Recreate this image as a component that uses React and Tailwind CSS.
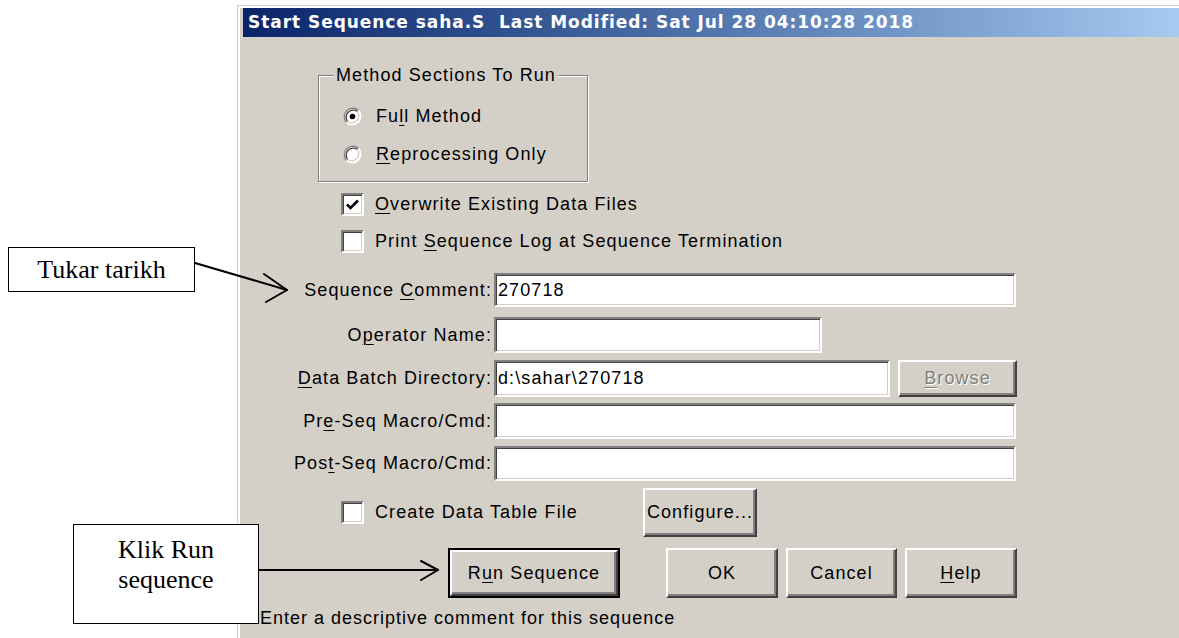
import React from "react";

// Mnemonic letter of a Windows control label
function U({ children }) {
  return <span className="underline underline-offset-[3px] decoration-1">{children}</span>;
}

function Radio({ checked }) {
  return (
    <svg width="19" height="19" viewBox="0 0 19 19" className="shrink-0">
      <circle cx="9.5" cy="9.5" r="8.5" fill="#fff" />
      <path d="M3.5 15.5 A8.5 8.5 0 0 1 15.5 3.5" stroke="#808080" strokeWidth="1.5" fill="none" />
      <path d="M3.5 15.5 A8.5 8.5 0 0 0 15.5 3.5" stroke="#ffffff" strokeWidth="1.5" fill="none" />
      <path d="M4.6 14.4 A7 7 0 0 1 14.4 4.6" stroke="#404040" strokeWidth="1.3" fill="none" />
      <path d="M4.6 14.4 A7 7 0 0 0 14.4 4.6" stroke="#d4d0c8" strokeWidth="1.3" fill="none" />
      {checked && <circle cx="9.5" cy="9.5" r="2.8" fill="#000" />}
    </svg>
  );
}

function Check({ checked }) {
  return (
    <div className="w-[23px] h-[23px] shrink-0 bg-white border-2 border-t-[#808080] border-l-[#808080] border-r-white border-b-white shadow-[inset_1px_1px_0_#404040,inset_-1px_-1px_0_#d4d0c8] flex items-center justify-center">
      {checked && (
        <svg width="17" height="17" viewBox="0 0 17 17">
          <path d="M3 8.5 L6.5 12 L14 4.5" stroke="#000" strokeWidth="2.6" fill="none" />
        </svg>
      )}
    </div>
  );
}

function Field({ className, value }) {
  return (
    <div
      className={
        "bg-white border-2 border-t-[#808080] border-l-[#808080] border-r-white border-b-white shadow-[inset_1px_1px_0_#404040,inset_-1px_-1px_0_#d4d0c8] flex items-center pl-[2px] " +
        className
      }
    >
      {value}
    </div>
  );
}

function Button({ className, children, disabled }) {
  return (
    <div
      className={
        "bg-[#d4d0c8] border-2 border-t-white border-l-white border-r-[#404040] border-b-[#404040] shadow-[inset_-2px_-2px_0_#808080] flex items-center justify-center " +
        (disabled ? "text-[#808080] [text-shadow:1px_1px_0_#fff] " : "") +
        className
      }
    >
      {children}
    </div>
  );
}

function LabeledRow({ label, children, className }) {
  return (
    <div className={"flex items-center " + className}>
      <div className="w-[249px] text-right whitespace-nowrap">{label}</div>
      <div className="ml-[2px] flex items-center">{children}</div>
    </div>
  );
}

export default function App() {
  return (
    <div className="relative w-[1179px] h-[638px] overflow-hidden bg-white">
      {/* dialog window */}
      <div className="pl-[237px] pt-[5px]">
        <div className="w-[942px] h-[633px] bg-[#d4d0c8] border-l border-t border-[#d4d0c8] shadow-[inset_2px_2px_0_#fff] pl-[5px] pt-[2px] font-['Liberation_Sans',Arial,sans-serif] text-[18px] tracking-[1.1px] text-black">
          <div className="h-[29px] bg-linear-to-r from-[#0a246a] to-[#a6caf0] flex items-center pl-[5px]">
            <span className="font-['DejaVu_Sans',sans-serif] font-bold text-[17px] tracking-[0.95px] text-white whitespace-pre">
              Start Sequence saha.S  Last Modified: Sat Jul 28 04:10:28 2018
            </span>
          </div>

          {/* method sections group */}
          <fieldset className="ml-[75px] mt-[27px] w-[270px] border border-[#808080] shadow-[inset_1px_1px_0_#fff,1px_1px_0_#fff] pl-[24px] pt-[11px] pb-[8px]">
            <legend className="ml-[-9px] px-[2px] leading-[22px] bg-[#d4d0c8]">Method Sections To Run</legend>
            <div className="flex items-center h-[38px] gap-[14px]">
              <Radio checked />
              <span>
                Fu<U>l</U>l Method
              </span>
            </div>
            <div className="flex items-center h-[38px] gap-[14px]">
              <Radio />
              <span>
                <U>R</U>eprocessing Only
              </span>
            </div>
          </fieldset>

          <div className="ml-[98px] mt-[4px]">
            <div className="flex items-center h-[37px] gap-[11px]">
              <Check checked />
              <span>
                <U>O</U>verwrite Existing Data Files
              </span>
            </div>
            <div className="flex items-center h-[37px] gap-[11px]">
              <Check />
              <span>
                Print <U>S</U>equence Log at Sequence Termination
              </span>
            </div>
          </div>

          <LabeledRow
            className="mt-[13px] h-[34px]"
            label={
              <>
                Sequence <U>C</U>omment:
              </>
            }
          >
            <Field className="w-[522px] h-[34px]" value="270718" />
          </LabeledRow>

          <LabeledRow
            className="mt-[10px] h-[36px]"
            label={
              <>
                O<U>p</U>erator Name:
              </>
            }
          >
            <Field className="w-[328px] h-[36px]" value="" />
          </LabeledRow>

          <LabeledRow
            className="mt-[7px] h-[37px]"
            label={
              <>
                <U>D</U>ata Batch Directory:
              </>
            }
          >
            <Field className="w-[396px] h-[37px]" value="d:\sahar\270718" />
            <Button className="ml-[8px] w-[119px] h-[37px]" disabled>
              <span>
                <U>B</U>rowse
              </span>
            </Button>
          </LabeledRow>

          <LabeledRow
            className="mt-[6px] h-[36px]"
            label={
              <>
                Pr<U>e</U>-Seq Macro/Cmd:
              </>
            }
          >
            <Field className="w-[522px] h-[36px]" value="" />
          </LabeledRow>

          <LabeledRow
            className="mt-[7px] h-[35px]"
            label={
              <>
                Pos<U>t</U>-Seq Macro/Cmd:
              </>
            }
          >
            <Field className="w-[522px] h-[35px]" value="" />
          </LabeledRow>

          <div className="ml-[98px] mt-[7px] h-[49px] flex items-center">
            <Check />
            <span className="ml-[11px] w-[268px]">Create Data Table File</span>
            <Button className="w-[114px] h-[49px]">Configure...</Button>
          </div>

          <div className="ml-[205px] mt-[11px] h-[50px] flex items-center">
            <div className="w-[172px] h-[50px] border-2 border-black">
              <Button className="w-full h-full">
                <span>
                  R<U>u</U>n Sequence
                </span>
              </Button>
            </div>
            <Button className="ml-[46px] w-[112px] h-[50px]">OK</Button>
            <Button className="ml-[8px] w-[111px] h-[50px]">Cancel</Button>
            <Button className="ml-[8px] w-[112px] h-[50px]">
              <span>
                <U>H</U>elp
              </span>
            </Button>
          </div>

          <div className="ml-[17px] mt-[9px] h-[22px] leading-[22px] tracking-[1px]">
            Enter a descriptive comment for this sequence
          </div>
        </div>
      </div>

      {/* callout notes */}
      <div className="absolute left-[8px] top-[247px] w-[187px] h-[45px] border border-black bg-white flex items-center justify-center font-['Liberation_Serif','Times_New_Roman',serif] text-[26px] leading-[30px]">
        Tukar tarikh
      </div>
      <div className="absolute left-[73px] top-[524px] w-[186px] h-[100px] border border-black bg-white flex flex-col items-center pt-[10px] font-['Liberation_Serif','Times_New_Roman',serif] text-[26px] leading-[30px]">
        <span>Klik Run</span>
        <span>sequence</span>
      </div>

      {/* callout arrows */}
      <svg className="absolute left-0 top-0 pointer-events-none" width="1179" height="638" viewBox="0 0 1179 638">
        <g stroke="#000" strokeWidth="2" fill="none" strokeLinecap="round" strokeLinejoin="round">
          <path d="M195 263 L287 290" />
          <path d="M264 274 L287 290 L266 302" />
          <path d="M259 570 H438" />
          <path d="M421 561 L438 570 L421 580" />
        </g>
      </svg>
    </div>
  );
}
